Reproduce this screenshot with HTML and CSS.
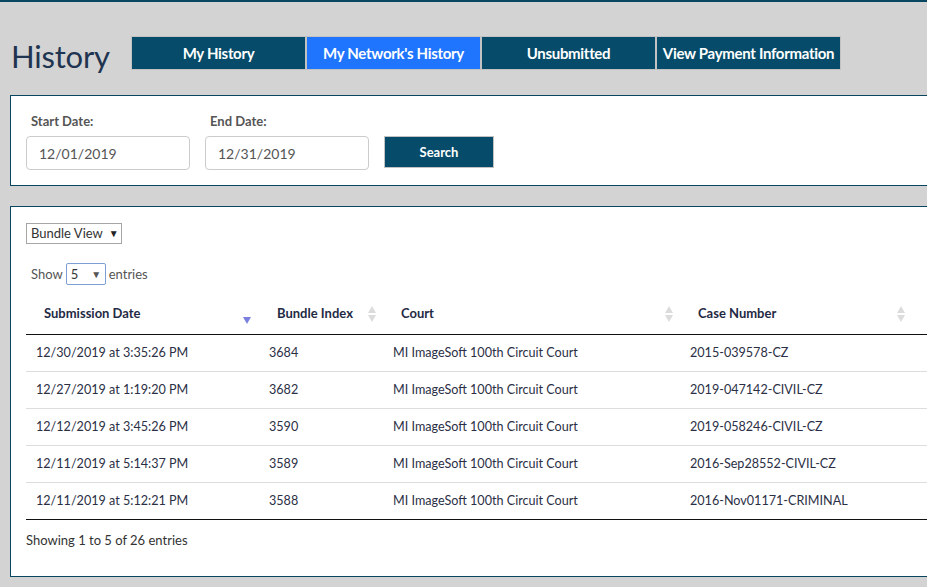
FILE: index.html
```html
<!DOCTYPE html>
<html>
<head>
<meta charset="utf-8">
<link rel="stylesheet" href="styles.css">
</head>
<body>
<div class="page">
  <div class="head">
    <h1 class="title">History</h1>
    <nav class="tabs">
      <a class="tab">My History</a>
      <a class="tab active">My Network's History</a>
      <a class="tab">Unsubmitted</a>
      <a class="tab wide">View Payment Information</a>
    </nav>
  </div>

  <section class="panel search-panel">
    <div class="field">
      <label class="lbl">Start Date:</label>
      <div class="input">12/01/2019</div>
    </div>
    <div class="field">
      <label class="lbl">End Date:</label>
      <div class="input">12/31/2019</div>
    </div>
    <button class="btn">Search</button>
  </section>

  <section class="panel results">
    <div class="select view-select">Bundle View <span class="caret">&#9660;</span></div>
    <div class="length">Show <span class="select small-select">5 <span class="caret gray">&#9660;</span></span> entries</div>
    <table class="grid">
      <colgroup>
        <col class="c1"><col class="c2"><col class="c3"><col class="c4"><col class="c5">
      </colgroup>
      <thead>
        <tr>
          <th class="sort-desc">Submission Date</th>
          <th class="sort">Bundle Index</th>
          <th class="sort">Court</th>
          <th class="sort">Case Number</th>
          <th></th>
        </tr>
      </thead>
      <tbody>
        <tr><td>12/30/2019 at 3:35:26 PM</td><td>3684</td><td>MI ImageSoft 100th Circuit Court</td><td>2015-039578-CZ</td><td></td></tr>
        <tr><td>12/27/2019 at 1:19:20 PM</td><td>3682</td><td>MI ImageSoft 100th Circuit Court</td><td>2019-047142-CIVIL-CZ</td><td></td></tr>
        <tr><td>12/12/2019 at 3:45:26 PM</td><td>3590</td><td>MI ImageSoft 100th Circuit Court</td><td>2019-058246-CIVIL-CZ</td><td></td></tr>
        <tr><td>12/11/2019 at 5:14:37 PM</td><td>3589</td><td>MI ImageSoft 100th Circuit Court</td><td>2016-Sep28552-CIVIL-CZ</td><td></td></tr>
        <tr><td>12/11/2019 at 5:12:21 PM</td><td>3588</td><td>MI ImageSoft 100th Circuit Court</td><td>2016-Nov01171-CRIMINAL</td><td></td></tr>
      </tbody>
    </table>
    <div class="info">Showing 1 to 5 of 26 entries</div>
  </section>
</div>
</body>
</html>
```

FILE: styles.css
```css
html, body {
  margin: 0;
  padding: 0;
  overflow: hidden;
}
body {
  background: #d3d3d3;
  font-family: Lato, "Open Sans", sans-serif;
  color: #333;
  width: 927px;
  height: 587px;
}
.page {
  border-top: 2px solid #08465f;
  padding: 0 0 0 10px;
  width: 1100px;
}
.head {
  display: flex;
  align-items: flex-start;
  height: 93px;
}
.title {
  margin: 36px 0 0 1px;
  font-weight: 400;
  font-size: 31px;
  line-height: 36px;
  color: #1f3450;
  width: 121px;
  letter-spacing: -0.2px;
}
.tabs {
  display: flex;
  margin-top: 34px;
  margin-left: -1px;
}
.tab {
  box-sizing: border-box;
  width: 175px;
  height: 34px;
  border: 1px solid #c2c2c2;
  background: #064c6a;
  color: #fff;
  font-size: 15px;
  font-weight: 700;
  display: flex;
  align-items: center;
  justify-content: center;
  letter-spacing: -0.3px;
}
.tab.active { background: #1f75fe; }
.tab.wide { width: 185px; }

.panel {
  background: #fff;
  border: 1px solid #08465f;
  border-right: none;
  box-sizing: border-box;
}
.search-panel {
  height: 91px;
  display: flex;
  align-items: flex-start;
  padding: 16px 0 0 15px;
  gap: 15px;
}
.field {
  display: flex;
  flex-direction: column;
}
.lbl {
  font-size: 13px;
  font-weight: 700;
  color: #555;
  padding-left: 5px;
  height: 24px;
  line-height: 18px;
}
.input {
  box-sizing: border-box;
  width: 164px;
  height: 34px;
  border: 1px solid #ccc;
  border-radius: 4px;
  padding-left: 12px;
  font-size: 14px;
  color: #555;
  display: flex;
  align-items: center;
}
.btn {
  margin-top: 24px;
  width: 110px;
  height: 32px;
  background: #064c6a;
  border: 1px solid #c2c2c2;
  color: #fff;
  font-family: inherit;
  font-size: 13px;
  font-weight: 700;
  padding: 0;
}

.results {
  margin-top: 20px;
  height: 371px;
  padding: 15px 0 0 15px;
}
.select {
  box-sizing: border-box;
  display: inline-flex;
  align-items: center;
  border: 1px solid #a6a6a6;
  font-size: 13px;
  color: #333;
  background: #fff;
}
.view-select {
  height: 21px;
  width: 96px;
  padding-left: 4px;
  padding-bottom: 1px;
}
.caret {
  font-size: 10px;
  margin-left: 6px;
  color: #222;
}
.caret.gray { color: #555; margin-left: 13px; }
.length {
  margin-top: 19px;
  font-size: 13px;
  color: #555;
  display: flex;
  align-items: center;
  padding-left: 5px;
  gap: 3px;
}
.small-select {
  height: 22px;
  width: 40px;
  border: 1px solid #7d9fd6;
  border-radius: 2px;
  padding-left: 4px;
  color: #333;
}
.grid {
  margin-top: 10px;
  border-collapse: collapse;
  table-layout: fixed;
  width: 1050px;
  font-size: 12.6px;
}
.c1 { width: 233px; }
.c2 { width: 124px; }
.c3 { width: 297px; }
.c4 { width: 232px; }
th {
  text-align: left;
  font-weight: 700;
  font-size: 13px;
  color: #1f2a44;
  height: 39px;
  box-sizing: border-box;
  padding: 0 18px 2px;
  border-bottom: 1px solid #111;
  position: relative;
}
th.sort-desc::after {
  content: "";
  position: absolute;
  right: 8px;
  top: 22px;
  border-left: 4px solid transparent;
  border-right: 4px solid transparent;
  border-top: 7px solid #7b80e0;
}
th.sort::before, th.sort::after {
  content: "";
  position: absolute;
  right: 7px;
  border-left: 4px solid transparent;
  border-right: 4px solid transparent;
}
th.sort::before { top: 11px; border-bottom: 7px solid #dcdcdc; }
th.sort::after { top: 20px; border-top: 7px solid #dcdcdc; }
td {
  padding: 0 10px 1px;
  height: 37px;
  box-sizing: border-box;
  border-top: 1px solid #ddd;
  color: #2b2f45;
  white-space: nowrap;
}
tbody tr:first-child td { border-top: none; }
tbody tr:last-child td { border-bottom: 1px solid #111; }
.info {
  margin-top: 12px;
  font-size: 13px;
  color: #333;
}
```
